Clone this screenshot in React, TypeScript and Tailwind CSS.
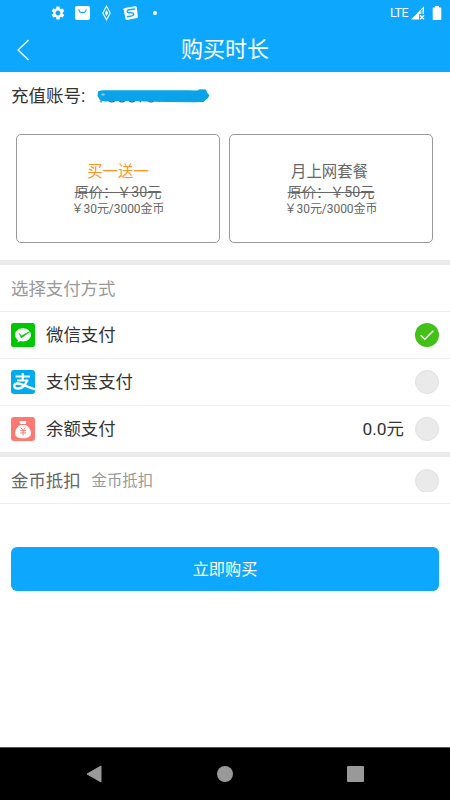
import type { ReactNode } from "react";
import { MdSettings } from "react-icons/md";

const packages = [
  {
    name: "买一送一",
    original: "原价：￥30元",
    price: "￥30元/3000金币",
    nameColor: "text-[#ff9326]",
  },
  {
    name: "月上网套餐",
    original: "原价：￥50元",
    price: "￥30元/3000金币",
    nameColor: "text-[#666666] pr-[3px]",
  },
];

const WechatIcon = () => (
  <svg width="24" height="24" viewBox="0 0 24 24">
    <rect width="24" height="24" rx="2.5" fill="#00c800" />
    <path
      d="M12 5.2c-4.5 0-8 2.9-8 6.6 0 2.1 1.2 4 3 5.2l-.5 2.6 2.7-1.5c.9.3 1.8.4 2.8.4 4.5 0 8-3 8-6.7s-3.5-6.6-8-6.6z"
      fill="#fff"
    />
    <path
      d="M8 10.300l2.600 2.500L20.500 7.600 10.300 14.900z"
      fill="#00c800"
      stroke="#00c800"
      strokeWidth="0.5"
      strokeLinejoin="round"
    />
  </svg>
);

const AlipayIcon = () => (
  <svg width="24" height="24" viewBox="0 0 24 24">
    <rect width="24" height="24" rx="3" fill="#00aaee" />
    <g fill="none" stroke="#fff">
      <path d="M4.500 6.500h14.500M11.700 3v7.500M6 10.500h11.300" strokeWidth="2.2" />
      <path
        d="M16.300 10c-1.600 4.600-4.900 8.500-9.200 8.500-2.400 0-3.900-1-3.900-2.500 0-1.600 1.500-2.500 3.600-2.500 3.900 0 8.300 3.300 17.200 5.600"
        strokeWidth="2.3"
      />
    </g>
  </svg>
);

const BalanceIcon = () => (
  <svg width="24" height="24" viewBox="0 0 24 24">
    <rect width="24" height="24" rx="3" fill="#ff7872" />
    <path
      d="M8.600 4.500c1-.9 2 .1 3.300-.6 1.300.7 2.300-.3 3.400.6.600.6-.4 1.700-1 2.600H9.700c-.6-.9-1.600-2-1.100-2.600z"
      fill="#fff"
    />
    <path
      d="M9.300 8h5.400c3.100 1.700 5.300 4.900 5.300 8 0 3.800-3 5.300-8 5.300s-8-1.500-8-5.300c0-3.100 2.200-6.300 5.300-8z"
      fill="#fff"
    />
    <path
      d="M9.600 10.500l2.500 2.800 2.500-2.800M9.200 13.700h5.800M9.200 15.900h5.800M12.100 13.300v5.200"
      fill="none"
      stroke="#ff7872"
      strokeWidth="1"
    />
  </svg>
);

const Radio = ({ checked }: { checked?: boolean }) =>
  checked ? (
    <svg width="24" height="24" viewBox="0 0 24 24">
      <circle cx="12" cy="12" r="12" fill="#43c117" />
      <path
        d="M5.600 12.200l4.200 4.100 8.500-8.600"
        fill="none"
        stroke="#fff"
        strokeWidth="1.5"
      />
    </svg>
  ) : (
    <span className="block size-6 rounded-full border border-[#e0e0e0] bg-[#eaeaea]" />
  );

const methods: {
  icon: ReactNode;
  label: string;
  amount?: string;
  checked?: boolean;
}[] = [
  { icon: <WechatIcon />, label: "微信支付", checked: true },
  { icon: <AlipayIcon />, label: "支付宝支付" },
  { icon: <BalanceIcon />, label: "余额支付", amount: "0.0元" },
];

const StatusBar = () => (
  <div className="flex h-[26px] items-center justify-between pl-[50px] pr-2 text-white">
    <div className="flex items-center">
      <MdSettings size={16} />
      <svg className="ml-[9px]" width="15" height="14" viewBox="0 0 15 14">
        <rect width="15" height="14" rx="2" fill="#fff" />
        <path
          d="M3.800 3.200c.3 4.600 7.100 4.600 7.400 0"
          fill="none"
          stroke="#0da8fd"
          strokeWidth="1.1"
        />
      </svg>
      <svg className="ml-3" width="9" height="16" viewBox="0 0 9 16">
        <path
          d="M4.500 1.200L8.200 8l-3.700 6.800L.8 8z"
          fill="none"
          stroke="#fff"
          strokeWidth="1.1"
        />
        <path d="M4.500 5l1.600 3-1.600 3-1.600-3z" fill="#fff" />
      </svg>
      <svg className="ml-3" width="15" height="16" viewBox="0 0 16 16">
        <path
          d="M1.700 2.700L13.200.9q1.300-.1 1.500 1l1.200 10.200q0 1-1 1.300L4 15.400q-1 .1-1.300-1L.6 4q0-1.100 1.100-1.300z"
          fill="#fff"
        />
        <path
          d="M13 3.700L6.500 4.500c-2.800.4-2.700 3.200-.2 3.300l3.300.1c2.500.1 2.400 2.700-.1 3.200l-5.300.9"
          fill="none"
          stroke="#0da8fd"
          strokeWidth="1.5"
        />
      </svg>
      <span className="ml-[15px] size-1 rounded-full bg-white" />
    </div>
    <div className="flex items-center">
      <span className="text-[12.5px] tracking-[-0.5px]">LTE</span>
      <svg className="ml-[3px]" width="14" height="14" viewBox="0 0 14 14">
        <path d="M0 13.500L13 .3V8H8v5.500z" fill="#fff" />
        <path d="M9.600 4.800L11.800 2.600V8H9.600z" fill="#0da8fd" opacity=".7" />
        <path
          d="M9 9.200l4 4M13 9.200l-4 4"
          stroke="#fff"
          strokeWidth="1.4"
        />
      </svg>
      <svg className="ml-[7px]" width="10" height="14" viewBox="0 0 10 14">
        <path
          d="M3 0h4v1.500h1.500q.8 0 .8.8v10.900q0 .8-.8.8h-7q-.8 0-.8-.8V2.300q0-.8.8-.8H3z"
          fill="#fff"
        />
      </svg>
    </div>
  </div>
);

const App = () => {
  return (
    <div className="flex h-[800px] w-[450px] flex-col overflow-hidden bg-white font-['Roboto','Noto_Sans_CJK_SC',sans-serif] text-[#333333]">
      <header className="h-[72px] shrink-0 bg-[#0da8fd] text-white">
        <StatusBar />
        <div className="grid h-[46px] grid-cols-[60px_1fr_60px] items-center">
          <svg className="ml-[17px]" width="13" height="22" viewBox="0 0 13 22">
            <path
              d="M11.500 1L1 11l10.500 10"
              fill="none"
              stroke="#fff"
              strokeWidth="1.3"
            />
          </svg>
          <h1 className="pt-px text-center text-[22px] leading-[46px]">
            购买时长
          </h1>
        </div>
      </header>

      <div className="flex h-[46px] shrink-0 items-center pl-[11px] pt-0.5 text-[17.5px]">
        <span>充值账号:</span>
        {/* number is scribbled over */}
        <svg className="ml-3" width="114" height="18" viewBox="0 0 114 18">
          <path
            d="M4 14v1.500M12 13.500q3 3 6 0M22 13.500q3 3 6 0M32 13.500q3 3 6 0M44 13.500l-1 1.500M51 13.500q3 3 6 0M63 13.500l-1 1.500"
            fill="none"
            stroke="#444"
            strokeWidth="1.1"
          />
          <path
            d="M1 4.500Q3 3 8 3.200L91 3.300l9 .3 3-1.300 6 .3 1 3 2.500 3-2 3-2 1.500-2 2-9 .2-28-.4-40-.8-20 .4q-7-.1-7-2.300L.5 9z"
            fill="#0aa2e9"
          />
          <ellipse cx="6" cy="7.500" rx="2" ry="1" fill="#8fd2f3" />
        </svg>
      </div>

      <div className="mt-4 flex gap-[9px] px-4">
        {packages.map((item) => (
          <div
            key={item.original}
            className="flex h-[109px] w-[204px] flex-col items-center rounded-[5px] border-[1.5px] border-[#999999] pt-[27px] text-[#666666]"
          >
            <p className={`text-[15.4px] leading-[21px] ${item.nameColor}`}>
              {item.name}
            </p>
            <p className="text-[14.2px] leading-[18px] line-through">
              {item.original}
            </p>
            <p className="text-[12px] leading-[17px] tracking-[-0.05px]">
              {item.price}
            </p>
          </div>
        ))}
      </div>

      <div className="mt-[17px] h-[5px] shrink-0 bg-[#eaeaea]" />

      <div className="flex h-[47px] shrink-0 items-center border-b border-[#eeeeee] pl-[11px] pt-0.5 text-[17.4px] text-[#999999]">
        选择支付方式
      </div>
      {methods.map((method) => (
        <div
          key={method.label}
          className="flex h-[47px] shrink-0 items-center border-b border-[#eeeeee] px-[11px] text-[17.4px]"
        >
          {method.icon}
          <span className="ml-[11px]">{method.label}</span>
          <span className="ml-auto mr-[11px]">{method.amount}</span>
          <Radio checked={method.checked} />
        </div>
      ))}

      {/* overlaps the last row's divider */}
      <div className="-mt-px h-[5px] shrink-0 bg-[#eaeaea]" />

      <div className="flex h-[47px] shrink-0 items-center border-b border-[#eeeeee] px-[11px]">
        <span className="pt-0.5 text-[17.4px] text-[#666666]">金币抵扣</span>
        <span className="ml-[11px] pt-1 text-[15.4px] text-[#999999]">
          金币抵扣
        </span>
        <span className="ml-auto h-[23px] overflow-hidden">
          <Radio />
        </span>
      </div>

      <button className="mx-[11px] mt-[43px] h-11 shrink-0 rounded-[6px] bg-[#0da8fd] pt-[3px] text-[16.2px] text-white">
        立即购买
      </button>

      <nav className="mt-auto flex h-[53px] shrink-0 items-center justify-between border-t border-[#555555] bg-black px-[86px]">
        <svg width="16" height="18" viewBox="0 0 16 18">
          <path
            d="M15 1v16L1 9z"
            fill="#999"
            stroke="#999"
            strokeWidth="1"
            strokeLinejoin="round"
          />
        </svg>
        <span className="size-4 rounded-full bg-[#999999]" />
        <span className="h-4 w-[17px] rounded-[1px] bg-[#999999]" />
      </nav>
    </div>
  );
};

export default App;
